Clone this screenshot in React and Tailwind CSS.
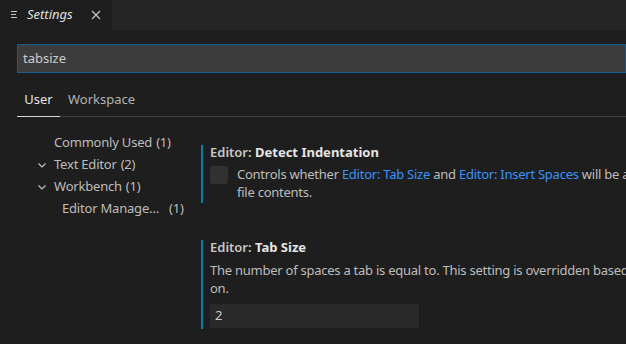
import React from 'react';

const font = { fontFamily: '"Noto Sans", "Open Sans", sans-serif' };

function Chevron() {
  return (
    <svg width="10" height="10" viewBox="0 0 10 10" className="shrink-0">
      <path d="M1.5 3.5 L5 7 L8.5 3.5" fill="none" stroke="#c5c5c5" strokeWidth="1.1" />
    </svg>
  );
}

function TreeItem({ label, count, chevron, indent = 'pl-[37px]', gap = 'ml-1' }) {
  return (
    <div className={`flex h-[22px] items-center ${indent} text-[13px] tracking-[-0.2px] text-[#bdbdbd]`}>
      {chevron !== undefined && (
        <span className="flex w-[17px] items-center">{chevron && <Chevron />}</span>
      )}
      <span>{label}</span>
      <span className={gap}>{count}</span>
    </div>
  );
}

export default function App() {
  return (
    <div className="h-[344px] w-[626px] overflow-hidden bg-[#1e1e1e]" style={font}>
      {/* tab bar */}
      <div className="flex h-[30px] bg-[#252526]">
        <div className="flex w-[112px] items-center bg-[#1e1e1e] pl-[11px]">
          <svg width="8" height="8" viewBox="0 0 8 8">
            <path d="M0 0.5 H6 M0 3.5 H5 M0 6.5 H6" stroke="#c5c5c5" strokeWidth="1" />
          </svg>
          <span className="ml-[8px] text-[13px] italic text-[#e0e0e0]">Settings</span>
          <svg width="10" height="10" viewBox="0 0 10 10" className="ml-auto mr-[11px]">
            <path d="M1 1 L9 9 M9 1 L1 9" stroke="#c5c5c5" strokeWidth="1.2" />
          </svg>
        </div>
      </div>

      <div className="pl-[17px]">
        {/* search */}
        <div className="mt-[14px] flex h-[29px] items-center border border-[#135f94] bg-[#3c3c3c] pl-[5px] text-[13px] text-[#cccccc]">
          tabsize
        </div>

        {/* scope tabs */}
        <div className="mt-[16px] flex h-[28px] items-stretch border-b border-[#3f3f3f]">
          <div className="-mb-px flex w-[43px] items-center justify-center border-b border-[#d6d6d6] pb-[6px] text-[13px] text-[#e6e6e6]">
            User
          </div>
          <div className="ml-[8px] flex items-center pb-[6px] text-[13px] text-[#b3b3b3]">Workspace</div>
        </div>
      </div>

      <div className="mt-[14px] flex">
        {/* tree */}
        <div className="w-[201px] shrink-0 pt-px">
          <TreeItem label="Commonly Used" count="(1)" indent="pl-[54px]" />
          <TreeItem label="Text Editor" count="(2)" chevron />
          <TreeItem label="Workbench" count="(1)" chevron />
          <TreeItem label="Editor Manage…" count="(1)" indent="pl-[62px]" gap="ml-[10px]" />
        </div>

        {/* settings list */}
        <div className="mt-[14px] w-[700px] shrink-0">
          <div className="border-l-2 border-[#0c7cab] pb-[2px] pl-[7px]">
            <div className="h-[15px] text-[13px] leading-[15px] text-[#c8c8c8]">
              <span className="font-semibold">Editor: </span>
              <span className="font-bold text-[#e6e6e6]">Detect Indentation</span>
            </div>
            <div className="mt-[5px] flex">
              <div className="mt-px h-[18px] w-[18px] shrink-0 rounded-[3px] bg-[#313131]" />
              <div className="ml-[9px] whitespace-nowrap text-[13px] leading-[18px] tracking-[-0.25px] text-[#bdbdbd]">
                Controls whether <span className="text-[#3794ff]">Editor: Tab Size</span> and{' '}
                <span className="text-[#3794ff]">Editor: Insert Spaces</span> will be automatically detected when a
                file is opened based on the
                <br />
                file contents.
              </div>
            </div>
          </div>

          <div className="mt-[37px] border-l-2 border-[#0c7cab] pb-px pl-[7px]">
            <div className="h-[14px] text-[13px] leading-[14px] text-[#c8c8c8]">
              <span className="font-semibold">Editor: </span>
              <span className="font-bold text-[#e6e6e6]">Tab Size</span>
            </div>
            <div className="mt-[7px] whitespace-nowrap text-[13px] leading-[18px] tracking-[-0.25px] text-[#bdbdbd]">
              The number of spaces a tab is equal to. This setting is overridden based on the file contents when{' '}
              <span className="text-[#3794ff]">Editor: Detect Indentation</span> is
              <br />
              on.
            </div>
            <div className="mt-[7px] flex h-[24px] w-[209px] items-center bg-[#292929] pl-[5px] text-[13px] text-[#cccccc]">
              2
            </div>
          </div>
        </div>
      </div>
    </div>
  );
}
